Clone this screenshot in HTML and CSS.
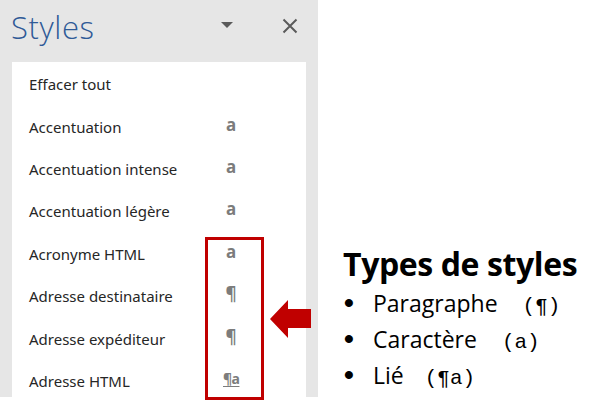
FILE: index.html
```html
<!DOCTYPE html>
<html lang="fr">
<head>
<meta charset="utf-8">
<title>Styles</title>
<link rel="stylesheet" href="styles.css">
</head>
<body>
<div class="page">
  <section class="panel">
    <header class="panel-head">
      <h1 class="panel-title">Styles</h1>
      <span class="dropdown"></span>
      <svg class="close" width="16" height="16" viewBox="0 0 16 16"><path d="M1.5 1.5L14.5 14.5M14.5 1.5L1.5 14.5" stroke="#5a5a5a" stroke-width="2" fill="none"/></svg>
    </header>
    <ul class="style-list">
      <li class="row"><span class="name">Effacer tout</span><span class="kind"></span></li>
      <li class="row"><span class="name">Accentuation</span><span class="kind">a</span></li>
      <li class="row"><span class="name">Accentuation intense</span><span class="kind">a</span></li>
      <li class="row"><span class="name">Accentuation légère</span><span class="kind">a</span></li>
      <li class="row"><span class="name">Acronyme HTML</span><span class="kind">a</span></li>
      <li class="row"><span class="name">Adresse destinataire</span><span class="kind">¶</span></li>
      <li class="row"><span class="name">Adresse expéditeur</span><span class="kind">¶</span></li>
      <li class="row"><span class="name">Adresse HTML</span><span class="kind linked">¶a</span></li>
    </ul>
  </section>
  <section class="legend">
    <h2 class="legend-title">Types de styles</h2>
    <ul class="legend-list">
      <li><span class="bullet">•</span><span class="lbl">Paragraphe</span><span class="code">(¶)</span></li>
      <li><span class="bullet">•</span><span class="lbl">Caractère</span><span class="code">(a)</span></li>
      <li><span class="bullet">•</span><span class="lbl lie">Lié</span><span class="code">(¶a)</span></li>
    </ul>
  </section>
  <div class="highlight"></div>
  <svg class="arrow" width="42" height="40" viewBox="0 0 42 40"><path d="M0 19L18 0V9H41V28H18V38Z" fill="#c00000"/></svg>
</div>
</body>
</html>
```
FILE: styles.css
```css
* { box-sizing: border-box; }
html, body { margin: 0; padding: 0; background: #fff; }
.page {
  position: relative;
  width: 598px;
  height: 411px;
  display: flex;
  overflow: hidden;
}
.panel {
  width: 318px;
  height: 397px;
  background: #e6e6e6;
  display: flex;
  flex-direction: column;
  flex: none;
}
.panel-head {
  height: 62px;
  display: flex;
  align-items: flex-start;
  padding: 0 20px 0 11px;
}
.panel-title {
  margin: 7px 0 0;
  font-family: "Open Sans", sans-serif;
  font-weight: 300;
  font-size: 31px;
  line-height: 40px;
  color: #2f5a97;
  letter-spacing: 0.6px;
}
.dropdown {
  margin: 22px 0 0 auto;
  width: 0; height: 0;
  border-left: 6px solid transparent;
  border-right: 6px solid transparent;
  border-top: 6px solid #5a5a5a;
}
.close { margin: 18px 0 0 49px; }
.style-list {
  list-style: none;
  margin: 0 0 0 12px;
  padding: 1px 0 0;
  width: 294px;
  flex: 1;
  background: #fff;
  overflow: hidden;
}
.row {
  height: 42.4px;
  display: flex;
  align-items: center;
  padding-left: 17px;
  font-family: "Noto Sans", sans-serif;
  font-size: 15px;
  color: #262626;
}
.name { width: 194px; }
.kind {
  width: 16px;
  text-align: center;
  font-family: "Noto Sans", sans-serif;
  font-weight: 700;
  font-size: 17px;
  color: #7c7c7c;
  margin-top: -5px;
}
.kind.linked { text-decoration: underline; text-decoration-thickness: 1px; text-underline-offset: 2px; font-size: 14px; letter-spacing: -0.5px; }
.legend {
  padding: 243px 0 0 25px;
  font-family: "Open Sans", sans-serif;
  color: #000;
}
.legend-title {
  margin: 0;
  font-weight: 700;
  font-size: 32px;
  line-height: 42px;
  letter-spacing: -0.4px;
}
.legend-list {
  list-style: none;
  margin: 0;
  padding: 0;
}
.legend-list li {
  display: flex;
  align-items: baseline;
  height: 36px;
  font-size: 23px;
  line-height: 36px;
}
.bullet {
  width: 30px;
  padding-left: 1px;
  font-family: "Liberation Sans", sans-serif;
  font-weight: 700;
  font-size: 28px;
}
.lbl { margin-right: 25px; }
.lbl.lie { margin-right: 21px; }
.code {
  font-family: "Liberation Mono", monospace;
  font-size: 21px;
}
.highlight {
  position: absolute;
  left: 205px;
  top: 237px;
  width: 59px;
  height: 163px;
  border: 3px solid #c00000;
}
.arrow {
  position: absolute;
  left: 270px;
  top: 300px;
}
```
